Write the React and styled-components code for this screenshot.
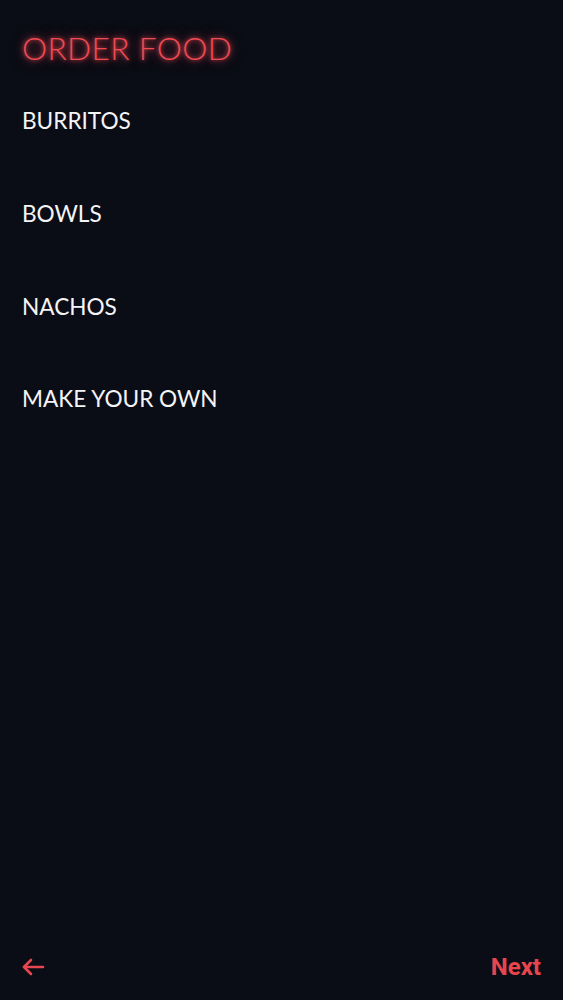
import React from "react";
import styled, { createGlobalStyle } from "styled-components";

const Global = createGlobalStyle`
    html, body{
        margin: 0;
        padding: 0;
        background-color: #0a0d16;
    }
    *{
        box-sizing: border-box;
    }
`;

const Screen = styled.div`
    position: relative;
    width: 563px;
    height: 1000px;
    display: flex;
    flex-direction: column;
    background-color: #0a0d16;
    font-family: Lato, "Open Sans", sans-serif;
`;

const Title = styled.h1`
    margin: 0;
    padding: 30px 0 0 22px;
    font-family: Lato, sans-serif;
    font-weight: 300;
    font-size: 31.8px;
    line-height: 36px;
    letter-spacing: 0.3px;
    color: #ef4b54;
    text-shadow: 0 0 4px rgba(238,74,82,0.9), 0 0 10px rgba(238,74,82,0.6), 0 0 18px rgba(238,74,82,0.35);
`;

const Menu = styled.ul`
    list-style: none;
    margin: 0;
    padding: 42px 0 0 22px;
    display: flex;
    flex-direction: column;
    gap: 67.8px;
    flex: 1;
`;

const Item = styled.li`
    font-family: Lato, sans-serif;
    font-weight: 400;
    font-size: 22.6px;
    line-height: 25px;
    color: #f4f4f6;
    cursor: pointer;
`;

const Footer = styled.div`
    display: flex;
    align-items: center;
    justify-content: space-between;
    padding: 0 22px 0 21px;
    height: 66px;
`;

const BackButton = styled.button`
    border: none;
    background: none;
    padding: 0;
    display: flex;
    cursor: pointer;
    color: #e8464f;
`;

const NextButton = styled.button`
    border: none;
    background: none;
    padding: 0;
    cursor: pointer;
    font-family: Roboto, sans-serif;
    font-weight: 700;
    font-size: 24px;
    color: #e8464f;
`;

const items = ['BURRITOS', 'BOWLS', 'NACHOS', 'MAKE YOUR OWN'];

export default function App(){
    return <Screen>
        <Global />
        <Title>ORDER FOOD</Title>
        <Menu>
            {items.map(v => <Item key={v}>{v}</Item>)}
        </Menu>
        <Footer>
            <BackButton aria-label='back'>
                <svg width="24" height="20" viewBox="0 0 24 20" fill="none" stroke="currentColor" strokeWidth="2.6" strokeLinecap="round" strokeLinejoin="round">
                    <path d="M22 10H3" />
                    <path d="M10 3L3 10l7 7" />
                </svg>
            </BackButton>
            <NextButton>Next</NextButton>
        </Footer>
    </Screen>
}
